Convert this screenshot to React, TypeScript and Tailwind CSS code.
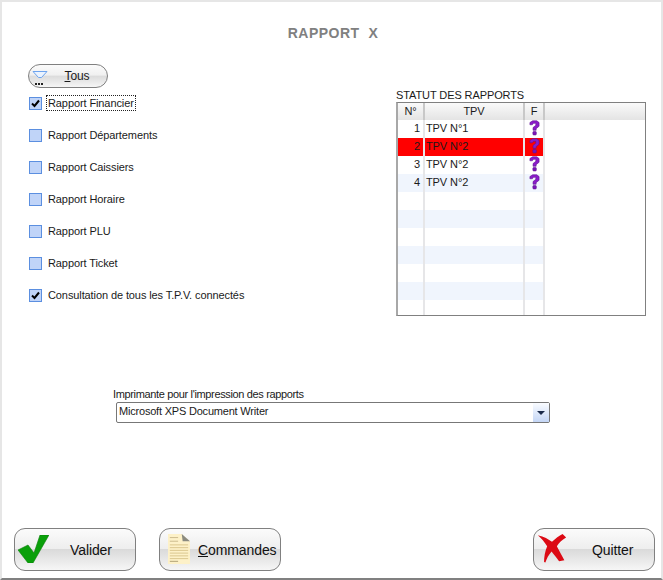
const font = "font-['Liberation_Sans',Arial,sans-serif]"

const reports = [
  { label: "Rapport Financier", checked: true, focused: true },
  { label: "Rapport Départements", checked: false },
  { label: "Rapport Caissiers", checked: false },
  { label: "Rapport Horaire", checked: false },
  { label: "Rapport PLU", checked: false },
  { label: "Rapport Ticket", checked: false },
  { label: "Consultation de tous les T.P.V. connectés", checked: true },
]

const rows = [
  { n: "1", name: "TPV N°1", bg: "bg-white" },
  { n: "2", name: "TPV N°2", bg: "bg-[#ff0000]" },
  { n: "3", name: "TPV N°2", bg: "bg-white" },
  { n: "4", name: "TPV N°2", bg: "bg-[#f0f5fd]" },
  { n: "", name: "", bg: "bg-white" },
  { n: "", name: "", bg: "bg-[#f0f5fd]" },
  { n: "", name: "", bg: "bg-white" },
  { n: "", name: "", bg: "bg-[#f0f5fd]" },
  { n: "", name: "", bg: "bg-white" },
  { n: "", name: "", bg: "bg-[#f0f5fd]" },
]

function Question() {
  return (
    <svg width="11" height="16" viewBox="0 0 12 17">
      <path
        d="M1 2.5 L4 .6 H8.5 L11 2.6 V6.6 L7.8 9.2 V11 H4.4 V8 L7.4 5.6 V3.4 H5 L3.6 5 H1 Z"
        fill="#8a1cc8"
        stroke="#5a1090"
        strokeWidth="0.6"
      />
      <rect x="4.2" y="12.3" width="3.8" height="3.8" rx="1" fill="#7a14b8" stroke="#5a1090" strokeWidth="0.6" />
    </svg>
  )
}

function Funnel() {
  return (
    <svg width="16" height="18" viewBox="0 0 16 18">
      <path d="M1 3.5 H15 L9.5 9.5 H6.5 Z" fill="#eaf3ff" stroke="#6ea4ee" strokeWidth="1" />
      <rect x="3" y="15" width="2" height="2" fill="#222" />
      <rect x="6" y="15" width="2" height="2" fill="#222" />
      <rect x="9" y="15" width="2" height="2" fill="#222" />
    </svg>
  )
}

function Check() {
  return (
    <svg width="31" height="28" viewBox="0 0 31 28">
      <path d="M0 15 L10 10 L16 18 L22 0 H31 L15 28 H10 Z" fill="#0aa00a" stroke="#0a7d0a" strokeWidth="0.6" />
    </svg>
  )
}

function Cross() {
  return (
    <svg width="30" height="30" viewBox="0 0 34 34">
      <path
        d="M1 2.5 C8 4 13 7 17 10 C21 6 25 3 29 1 L33 5 C28 8 25 11 22.5 15 C25 20 28 25 31 31 L25 32 C22 28 19 24 16.5 21 C13 25 11 29 9.5 33.5 L8 33 C8 27 9 21 11.5 15 C8.5 10 5 6 1 2.5 Z"
        fill="#dc0a14"
      />
    </svg>
  )
}

function Doc() {
  return (
    <svg width="24" height="32" viewBox="0 0 26 35">
      <path d="M1 1 H16 L25 9 V34 H1 Z" fill="#fdf1c8" />
      <path d="M16 1 L25 9 H17 Z" fill="#8a8a80" />
      <path d="M3 5 H12 M3 9 H12" stroke="#c9b88a" />
      <path d="M3 13 H23 M3 16 H23 M3 19 H23 M3 22 H23 M3 25 H23 M3 28 H23" stroke="#d8c48a" />
      <path d="M3 31 H12" stroke="#a89a70" />
    </svg>
  )
}

function BigButton({ icon, label, underline, iconBox, labelBox }: { icon: React.ReactNode; label: string; underline?: string; iconBox: string; labelBox: string }) {
  return (
    <div className="relative flex h-[43px] w-[122px] items-center overflow-hidden rounded-[11px] border border-[#808080] bg-[linear-gradient(to_bottom,#fbfbfb_0%,#eeeeee_48%,#dadada_50%,#f6f6f6_100%)]">
      <div className={iconBox}>{icon}</div>
      <span className={`absolute text-[14px] leading-none whitespace-nowrap text-[#111] ${labelBox}`}>
        {underline ? <span className="underline">{underline}</span> : null}
        {label}
      </span>
    </div>
  )
}

export default function App() {
  return (
    <div className={`${font} flex h-[580px] w-[663px] flex-col overflow-hidden border-t-2 border-r-2 border-b-2 border-l-2 border-t-[#e6e6e6] border-r-[#e6e6e6] border-b-[#808080] border-l-[#e6e6e6] bg-white text-[11px] tracking-[-0.1px] text-[#1a1a1a]`}>
      <h1 className="mt-[23px] pl-[3px] text-center text-[14px] leading-4 font-bold tracking-[0.5px] text-[#808080]">RAPPORT&nbsp; X</h1>

      <div className="mt-[23px] flex items-start">
        <div className="ml-[26px] w-[368px]">
          <div className="relative flex h-[24px] w-[80px] items-center justify-center rounded-full border border-[#808080] bg-[linear-gradient(to_bottom,#fbfbfb_0%,#f0f0f0_45%,#dcdcdc_52%,#f6f6f6_100%)] pl-[18px] text-[12px]">
            <span className="absolute top-[3px] left-[3px]"><Funnel /></span>
            <span><span className="underline">T</span>ous</span>
          </div>

          <div className="mt-[5px] flex flex-col gap-[12px]">
            {reports.map((r) => (
              <div key={r.label} className="flex h-[20px] items-center">
                <div className="ml-[1px] flex h-[13px] w-[13px] items-center justify-center border border-[#5b8fe0] bg-[#c0d4f8]">
                  {r.checked ? (
                    <svg width="9" height="9" viewBox="0 0 9 9">
                      <path d="M1 4.5 L3.5 7 L8 1.5" fill="none" stroke="#000" strokeWidth="2" />
                    </svg>
                  ) : null}
                </div>
                <span className={`ml-[5px] px-[1px] leading-[14px] ${r.focused ? "outline-1 outline-offset-0 outline-dotted outline-[#222]" : ""}`}>
                  {r.label}
                </span>
              </div>
            ))}
          </div>
        </div>

        <div className="mt-[25px]">
          <div className="h-[13px] leading-[13px]">STATUT DES RAPPORTS</div>
          <div className="h-[214px] w-[250px] border-t border-r border-b border-l-2 border-t-[#808080] border-r-[#808080] border-b-[#808080] border-l-[#a8a8a8] bg-white">
            <div className="flex h-[17px] bg-[linear-gradient(to_bottom,#fafafa,#e4e4e4)] text-center leading-[17px]">
              <div className="w-[27px] border-r-2 border-[#c8c8c8]">N°</div>
              <div className="w-[100px] border-r-2 border-[#c8c8c8]">TPV</div>
              <div className="w-[20px] border-r-2 border-[#c8c8c8]">F</div>
            </div>
            {rows.map((row, i) => (
              <div key={i} className={`flex h-[18px] w-[147px] leading-[17px] ${row.bg}`}>
                <div className="w-[27px] border-r-2 border-[#e6e6e8] pr-[3px] text-right">{row.n}</div>
                <div className="w-[100px] border-r-2 border-[#e6e6e8] pl-[1px]">{row.name}</div>
                <div className="flex w-[20px] justify-center border-r-2 border-[#e6e6e8]">
                  {row.name ? <Question /> : null}
                </div>
              </div>
            ))}
            <div className="flex h-[15px] w-[147px]">
              <div className="w-[27px] border-r-2 border-[#e6e6e8]" />
              <div className="w-[100px] border-r-2 border-[#e6e6e8]" />
              <div className="w-[20px] border-r-2 border-[#e6e6e8]" />
            </div>
          </div>
        </div>
      </div>

      <div className="mt-[72px] ml-[111px] h-[13px] leading-[13px] tracking-[-0.35px]">Imprimante pour l'impression des rapports</div>
      <div className="mt-[1px] ml-[114px] flex h-[21px] w-[434px] items-stretch rounded-[2px] border border-[#777] bg-white">
        <span className="flex-1 pl-[2px] leading-[16px] tracking-[-0.2px]">Microsoft XPS Document Writer</span>
        <div className="flex w-[16px] items-center justify-center bg-[linear-gradient(to_bottom,#fafcff,#c4d6f6)]">
          <div className="h-0 w-0 border-t-[4px] border-r-[4px] border-l-[4px] border-t-[#1a2a4a] border-r-transparent border-l-transparent" />
        </div>
      </div>

      <div className="mt-[105px] flex pr-[6px] pl-[12px]">
        <BigButton icon={<Check />} label="Valider" iconBox="absolute left-[3px] top-[6px]" labelBox="left-[55px]" />
        <div className="ml-[23px]">
          <BigButton icon={<Doc />} label="ommandes" underline="C" iconBox="absolute left-[7px] top-[4px]" labelBox="left-[38px]" />
        </div>
        <div className="ml-auto">
          <BigButton icon={<Cross />} label="Quitter" iconBox="absolute left-[3px] top-[4px]" labelBox="left-[58px]" />
        </div>
      </div>
    </div>
  )
}
